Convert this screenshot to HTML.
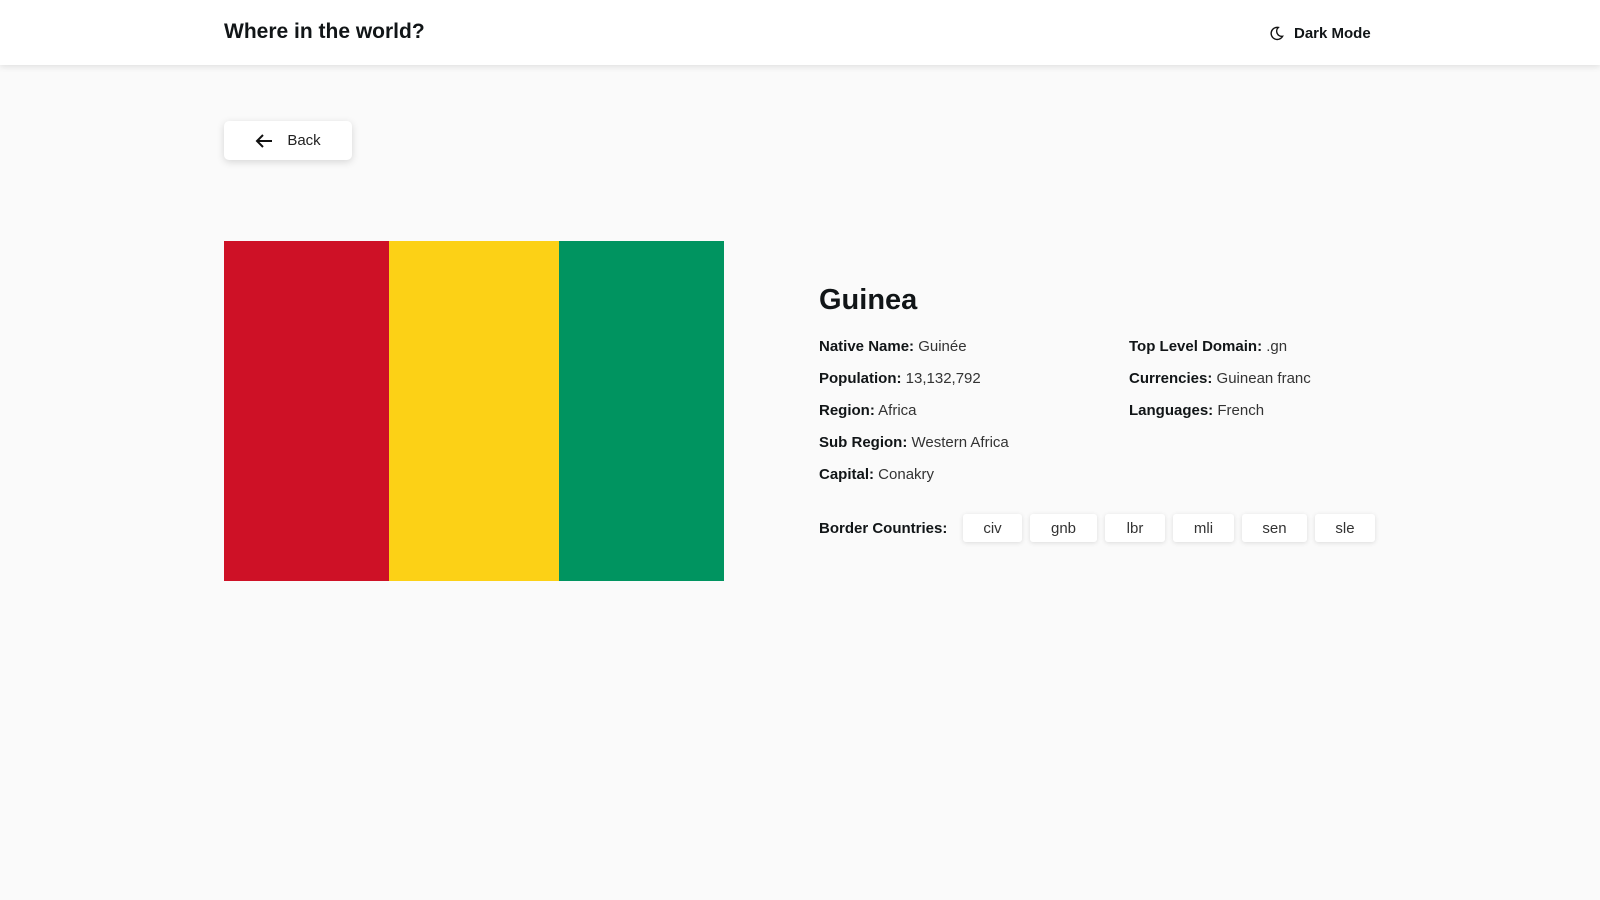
<!DOCTYPE html>
<html><head><meta charset="utf-8"><style>
*{margin:0;padding:0;box-sizing:border-box}
body{width:1600px;height:900px;background:#fafafa;font-family:"Liberation Sans",sans-serif;color:#111517;position:relative;overflow:hidden}
header{position:absolute;left:0;top:0;width:1600px;height:65px;background:#fff;box-shadow:0 2px 6px rgba(0,0,0,.1)}
.title{position:absolute;left:224px;top:20px;font-size:21px;font-weight:bold}
.dm{position:absolute;left:1269px;top:25px;font-size:15px;font-weight:bold;display:flex;align-items:center;gap:10px}
.back{position:absolute;left:224px;top:121px;width:128px;height:39px;background:#fff;border-radius:5px;box-shadow:0 2px 8px rgba(0,0,0,.15);display:flex;align-items:center;justify-content:center;gap:14px;font-size:15px;font-weight:300;color:#222}
.flag{position:absolute;left:224px;top:241px;width:500px;height:340px;display:flex}
h1{position:absolute;left:819px;top:284px;font-size:29px;font-weight:bold}
.row{position:absolute;font-size:15px;color:#333}
.row b{color:#111517}
.bl{position:absolute;left:819px;top:520px;font-size:15px;font-weight:bold}
.bt{position:absolute;top:514px;height:28px;background:#fff;border-radius:3px;box-shadow:0 1px 5px rgba(0,0,0,.12);font-size:15px;color:#333;display:flex;align-items:center;justify-content:center}
</style></head><body>
<header><div class="title">Where in the world?</div>
<div class="dm"><svg width="15" height="15" viewBox="0 0 16 16"><path d="M10 1.5A6.5 6.5 0 1 0 14.5 11 5.5 5.5 0 0 1 10 1.5Z" fill="none" stroke="#111" stroke-width="1.5"/></svg>Dark Mode</div></header>
<div class="back"><svg width="18" height="14" viewBox="0 0 18 14"><path d="M17 7H2M8 1 2 7l6 6" fill="none" stroke="#111" stroke-width="2"/></svg>Back</div>
<div class="flag"><div style="width:165px;background:#ce1126"></div><div style="width:170px;background:#fcd116"></div><div style="width:165px;background:#009460"></div></div>
<h1>Guinea</h1>
<div class="row" style="left:819px;top:338px"><b>Native Name:</b> Guinée</div>
<div class="row" style="left:819px;top:370px"><b>Population:</b> 13,132,792</div>
<div class="row" style="left:819px;top:402px"><b>Region:</b> Africa</div>
<div class="row" style="left:819px;top:434px"><b>Sub Region:</b> Western Africa</div>
<div class="row" style="left:819px;top:466px"><b>Capital:</b> Conakry</div>
<div class="row" style="left:1129px;top:338px"><b>Top Level Domain:</b> .gn</div>
<div class="row" style="left:1129px;top:370px"><b>Currencies:</b> Guinean franc</div>
<div class="row" style="left:1129px;top:402px"><b>Languages:</b> French</div>
<div class="bl">Border Countries:</div>
<div class="bt" style="left:963px;width:59px">civ</div>
<div class="bt" style="left:1030px;width:67px">gnb</div>
<div class="bt" style="left:1105px;width:60px">lbr</div>
<div class="bt" style="left:1173px;width:61px">mli</div>
<div class="bt" style="left:1242px;width:65px">sen</div>
<div class="bt" style="left:1315px;width:60px">sle</div>
</body></html>
